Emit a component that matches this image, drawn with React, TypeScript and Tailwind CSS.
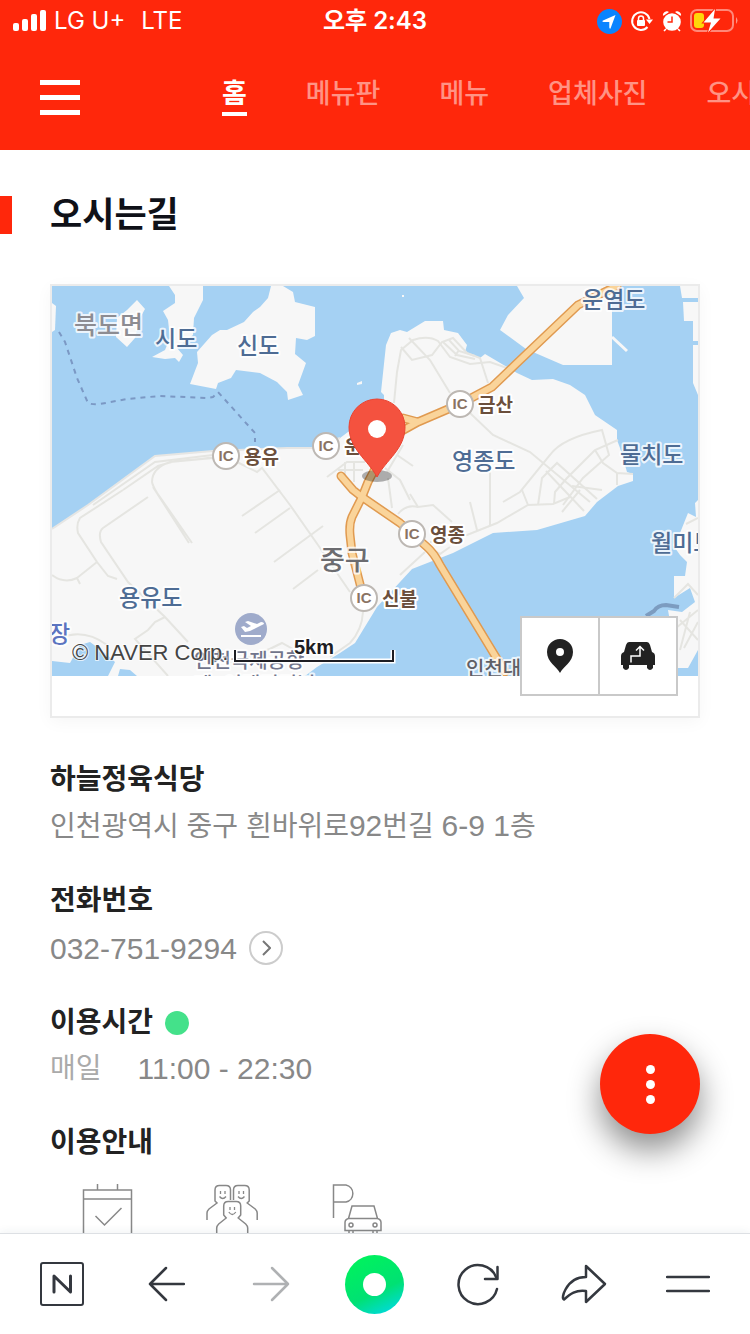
import React, { useState } from 'react';
import { clsx } from 'clsx';

const tabs = ['홈', '메뉴판', '메뉴', '업체사진', '오시는길'];

interface MapLabel {
    text: string;
    x: number;
    y: number;
    size: number;
    color: string;
}

const mapLabels: MapLabel[] = [
    { text: '북도면', x: 74, y: 334, size: 25, color: '#8c8c92' },
    { text: '시도', x: 155, y: 347, size: 23, color: '#4e6c94' },
    { text: '신도', x: 237, y: 354, size: 23, color: '#4e6c94' },
    { text: '운염도', x: 582, y: 308, size: 23, color: '#4e6c94' },
    { text: '영종도', x: 452, y: 469, size: 23, color: '#4e6c94' },
    { text: '물치도', x: 620, y: 463, size: 23, color: '#4e6c94' },
    { text: '용유도', x: 119, y: 606, size: 23, color: '#4e6c94' },
    { text: '월미도', x: 651, y: 551, size: 23, color: '#4e6c94' },
    { text: '장', x: 49, y: 642, size: 23, color: '#5b74c0' },
    { text: '중구', x: 320, y: 570, size: 27, color: '#6c6c70' },
    { text: '인천국제공항', x: 194, y: 668, size: 20, color: '#71758c' },
    { text: '제1여객터미널', x: 194, y: 692, size: 20, color: '#71758c' },
    { text: '인천대교', x: 466, y: 676, size: 20, color: '#5f5f66' },
];

const interchanges = [
    { name: '용유', x: 226, y: 456 },
    { name: '운서', x: 326, y: 446 },
    { name: '금산', x: 460, y: 404 },
    { name: '영종', x: 412, y: 534 },
    { name: '신불', x: 364, y: 598 },
];

// Land masses, drawn over the water
const land = [
    'M52 303l4 3-1 24-3 2z',
    'M117 318l10-8 10-10 8 9-5 9-5 20-8 9-11-10z',
    'M169 286l6 9v8l-12 8 5 9 2 18-5 12-13 7 13 2 10-1 4 4 4-7-6-7 16-13 1-17 9-18v-14z',
    'M271 286l-3 12-8 9-7 5-9 10-17 8h-7l-8 5-15 17 1 11-8 21 26 5 2-6 13-5 5-8 24 3 17 9 10 10 1 8 15-5-5-10 8-22-11-9 1-16 11 2 8-4v-29l-20-5-2-10-10-6z',
    'M357 383l5-2v3l-5 1z',
    'M402 295h2v2h-2z',
    'M52 529L88 505 155 456 213 451 287 448 312 448 340 438 348 432 384 412 384 395 381 392 386 345 391 333 400 330 407 332 425 321 443 321 444 330 458 333 467 345 465 352 480 358 485 354 517 373 532 380 553 379 570 385 585 395 595 415 617 430 617 440 620 448 627 472 633 474 633 481 618 486 597 502 585 516 537 530 493 533 453 553 412 569 377 607 355 643 340 653 317 667 305 676 137 676 130 670 120 669 118 676 108 676 115 662 105 653 90 642 80 645 70 663 52 661z',
    'M517 286l7 12-16 17-8 15 26 19 37 16h49v-79z',
    'M680 286l2 12h16v-12zM683 302l1 19h9v20h5v-39zM693 345v38l5 12v-50z',
    'M698 500l-3 3 1 14-8-4-8 20-7 12 7 10 7 7-2 14h-11v22l16-10 5 14-13 10-14-2 10 58h10l10-18z',
];

const roads = [
    'M93 505L155 462 213 455M123 490L80 518Q76 524 78 533L97 562 108 576 117 579',
    'M123 490L158 466 175 461 213 458M213 458L170 462Q152 468 152 482 153 488 165 505M155 490L192 543M153 487L189 543',
    'M148 497L103 528Q98 532 101 542L128 582 165 617 188 642',
    'M52 575Q64 584 77 578L97 562M77 578l3 6M165 617L155 622 148 630 135 639 168 676M60 638Q84 628 107 645',
    'M237 462L257 472 262 468 290 505 318 545 337 573 350 592',
    'M242 516L280 490M255 533L290 508M323 526L274 562M318 570L293 589',
    'M230 662Q260 655 282 643L300 653M363 612Q362 630 350 643L330 657',
    'M409 338L430 360 450 393M401 347L412 360 432 355 442 342 453 338 467 353 480 358 488 383',
    'M394 403L397 372 401 350 413 340Q428 335 438 341L450 357 470 364 490 362 507 368M443 342l14 13 18 4M449 340l10 11 16 5M455 356l4-6',
    'M470 413L493 435 530 452 590 502M503 502L520 492 550 455Q562 438 602 430L609 455 583 478 563 505',
    'M618 440L595 450 567 478 555 492 554 504M538 505L542 478 557 463 597 499M546 471L584 511M595 450L603 463 617 473 633 474M617 473v12',
    'M490 472v53M430 542L467 535 497 523 528 505 553 504 570 497 M522 490l6 15M470 502l7 28M410 494L418 507 433 505 452 522M398 514Q406 504 418 507M580 490l-18 22M572 486l30 4',
    'M387 472L403 445M385 468L400 480 410 500M397 455l16 11M388 478L392 508M327 477L347 462 365 462M345 462v18M354 462v20M338 470h25',
    'M427 547L440 554 450 547M400 575L425 552M698 518L686 524M674 598L688 584 698 595M680 620L698 640M690 612L680 650M698 610L676 628M698 622L684 648',
];

const highways = [
    'M617 286L578 305 517 363 492 387 460 404 418 422 400 432M403 418l15 4M377 465L368 482 362 497 352 517Q349 524 350 535L352 553 361 588',
    'M341 476L353 490 362 497 400 523 427 547Q434 553 440 565L505 672',
];

const MapView: React.FC = () => (
    <svg viewBox="52 286 646 390" preserveAspectRatio="xMidYMid slice" className="block h-[390px] w-full font-['Liberation_Sans','Noto_Sans_CJK_KR',sans-serif]">
        <rect x="52" y="286" width="646" height="390" fill="#a5d1f3" />
        {land.map(d => <path key={d} d={d} fill="#f7f7f7" />)}
        <path d="M612 337l15 14" stroke="#f7f7f7" strokeWidth="3" />
        <path d="M52 529L88 505 155 456 213 451 287 448 312 448 340 438" fill="none" stroke="#e6e6e4" strokeWidth="2" />
        {roads.map(d => <path key={d} d={d} fill="none" stroke="#e5e5e1" strokeWidth="2" />)}
        <path d="M59 332l6 10 12 36 11 25q5 2 12 1l27-5 33-3 47 2 6-1 5-5 37 41v9" fill="none" stroke="#7b98c4" strokeWidth="2" strokeDasharray="5 5" />
        <path d="M646 616l8-5q4-6 12-6l13 2" fill="none" stroke="#7c9cc0" strokeWidth="4" />
        {highways.map(d => <path key={d} d={d} fill="none" stroke="#e09a50" strokeWidth="9" strokeLinecap="round" strokeLinejoin="round" />)}
        {highways.map(d => <path key={d} d={d} fill="none" stroke="#fad49a" strokeWidth="6" strokeLinecap="round" strokeLinejoin="round" />)}

        {interchanges.map(ic => (
            <g key={ic.name}>
                <circle cx={ic.x} cy={ic.y} r="13" fill="#fff" stroke="#bdb8b3" strokeWidth="2" />
                <text x={ic.x} y={ic.y + 5} textAnchor="middle" fontSize="15" fontWeight="700" fill="#8a7364">IC</text>
                <text x={ic.x + 18} y={ic.y + 8} fontSize="19" fontWeight="700" fill="#6b4f3c" stroke="#fff" strokeWidth="4" strokeLinejoin="round" paintOrder="stroke">{ic.name}</text>
            </g>
        ))}

        <circle cx="251" cy="629" r="16" fill="#9fabcb" />
        <path d="M241 636h20" stroke="#fff" strokeWidth="2" />
        <path d="M241 627l3-1 3 2 4-2-6-4 3-1 9 3 4-2q3 0 3 2l-14 7-5 1z" fill="#fff" />

        {mapLabels.map(l => (
            <text key={l.text} x={l.x} y={l.y} fontSize={l.size} fontWeight="500" fill={l.color} stroke="#fff" strokeWidth="4" strokeOpacity="0.8" strokeLinejoin="round" paintOrder="stroke">{l.text}</text>
        ))}

        {/* Place marker */}
        <ellipse cx="377" cy="476" rx="15" ry="6" fill="#000" opacity="0.3" />
        <path d="M377 477C368 460 349 449 349 427a28 28 0 0 1 56 0c0 22-19 33-28 50z" fill="#f4523f" stroke="#ea4432" strokeWidth="1" />
        <circle cx="377" cy="429" r="9" fill="#fff" />

        {/* Copyright and scale bar */}
        <text x="72" y="660" fontSize="22" fill="#444" stroke="#fff" strokeWidth="2" strokeOpacity="0.7" paintOrder="stroke">© NAVER Corp.</text>
        <path d="M235 650v11h158v-11" fill="none" stroke="#fff" strokeWidth="5" />
        <path d="M235 650v11h158v-11" fill="none" stroke="#1e1e23" strokeWidth="2" />
        <text x="314" y="654" textAnchor="middle" fontSize="20" fontWeight="700" fill="#1e1e23" stroke="#fff" strokeWidth="3" paintOrder="stroke">5km</text>
    </svg>
);

const StatusBar: React.FC = () => (
    <div className="grid h-10 grid-cols-[1fr_auto_1fr] items-center px-3 pt-[2px] font-['Inter','Noto_Sans_CJK_KR',sans-serif] text-[24px] leading-[38px]">
        <div className="flex items-center gap-2">
            <svg width="34" height="22" viewBox="0 0 34 22" fill="currentColor">
                <rect x="1" y="13" width="6" height="8" rx="2" />
                <rect x="10" y="9" width="6" height="12" rx="2" />
                <rect x="19" y="4" width="6" height="17" rx="2" />
                <rect x="28" y="0" width="6" height="21" rx="2" />
            </svg>
            <span>LG U+</span>
            <span className="ml-2">LTE</span>
        </div>
        <div className="font-semibold">오후 2:43</div>
        <div className="flex items-center justify-end gap-2">
            <svg width="25" height="25" viewBox="0 0 25 25">
                <circle cx="12.500" cy="12.500" r="12.500" fill="#0a84ff" />
                <path d="M18.500 6L13.500 19.500Q12.500 20 12.300 18.500V13H6.500Q4.500 12.600 6 11.600z" fill="#fff" />
            </svg>
            <svg width="24" height="22" viewBox="0 0 24 22" fill="none" stroke="currentColor" strokeWidth="2">
                <path d="M19.500 9A8.800 8.800 0 1 0 17.500 17" />
                <path d="M16 9.500h7L19.500 14z" fill="currentColor" stroke="none" />
                <rect x="7" y="10" width="8" height="6" rx="1" fill="currentColor" stroke="none" />
                <path d="M8.500 11V8.500a2.500 2.500 0 0 1 5 0V11" strokeWidth="1.500" />
            </svg>
            <svg width="20" height="22" viewBox="0 0 20 22" fill="currentColor">
                <circle cx="10" cy="12" r="8.800" />
                <path d="M1.500 5A3.500 3.500 0 0 1 6 2zM18.500 5A3.500 3.500 0 0 0 14 2z" stroke="currentColor" strokeWidth="1.300" strokeLinejoin="round" />
                <path d="M4 19l-2 2M16 19l2 2" stroke="currentColor" strokeWidth="1.600" />
                <path d="M10 6.500V12H5.500" fill="none" stroke="#ff270b" strokeWidth="1.500" />
            </svg>
            <svg width="48" height="24" viewBox="0 0 48 24">
                <rect x="1" y="1" width="42" height="21" rx="6" fill="none" stroke="#fff" strokeOpacity="0.45" strokeWidth="2" />
                <path d="M46 8q3 3.500 0 7z" fill="#fff" opacity="0.5" />
                <rect x="4" y="4" width="10" height="15" rx="3" fill="#ffd60a" />
                <path d="M25 0L13.500 13.500H21L18 23.500 30.500 9.500H23.500z" fill="#fff" stroke="#ff270b" strokeWidth="2" paintOrder="stroke" />
            </svg>
        </div>
    </div>
);

const toolbarStroke = {
    fill: 'none',
    stroke: 'currentColor',
    strokeWidth: 2.5,
    strokeLinecap: 'round',
    strokeLinejoin: 'round',
} as const;

const BrowserToolbar: React.FC = () => (
    <nav className="fixed inset-x-0 bottom-0 z-20 grid h-[101px] grid-cols-7 items-center justify-items-center border-t border-[#dde0e4] bg-white px-[10px] text-[#34383f] shadow-[0_-2px_8px_rgba(40,60,90,0.06)]">
        <button aria-label="네이버 홈">
            <svg width="44" height="44" viewBox="0 0 44 44" {...toolbarStroke}>
                <rect x="1" y="1" width="42" height="42" rx="2" strokeWidth="2" />
                <path d="M14 30V14L30.500 30V14" strokeWidth="3" />
            </svg>
        </button>
        <button aria-label="뒤로">
            <svg width="38" height="38" viewBox="0 0 38 38" {...toolbarStroke}>
                <path d="M19 3L3 19l16 16M3 19h34" />
            </svg>
        </button>
        <button aria-label="앞으로" disabled className="text-[#afb1b3]">
            <svg width="38" height="38" viewBox="0 0 38 38" {...toolbarStroke}>
                <path d="M20 3l16 16-16 16M36 19H2" />
            </svg>
        </button>
        <button aria-label="그린닷" className="flex h-[59px] w-[59px] items-center justify-center rounded-full bg-[linear-gradient(155deg,#00f25d_10%,#00e173_60%,#00d9e8_95%)]">
            <span className="h-[23px] w-[23px] rounded-full bg-white" />
        </button>
        <button aria-label="새로고침">
            <svg width="44" height="44" viewBox="0 0 44 44" {...toolbarStroke}>
                <path d="M40 27A19.500 19.500 0 1 1 39 15" />
                <path d="M40.500 5v12H28" />
            </svg>
        </button>
        <button aria-label="공유">
            <svg width="46" height="40" viewBox="0 0 46 40" {...toolbarStroke}>
                <path d="M25 2l19 18-19 18V27C15 25.500 9 30 3 35.500 1 35 2 30 4.500 25.500 9 17 16 13 25 13z" />
            </svg>
        </button>
        <button aria-label="메뉴 더보기">
            <svg width="44" height="20" viewBox="0 0 44 20" {...toolbarStroke}>
                <path d="M1 3h42M1 17h42" />
            </svg>
        </button>
    </nav>
);

export default function App() {
    const [activeTab, setActiveTab] = useState('홈');

    return (
        <div className="bg-white font-['Liberation_Sans','Noto_Sans_CJK_KR',sans-serif] text-[#222]">
            <header className="bg-[#ff270b] text-white">
                <StatusBar />
                <div className="flex h-[110px] overflow-hidden pt-9 pl-10">
                    <button aria-label="전체 메뉴" className="mt-1 flex h-[35px] w-10 shrink-0 flex-col justify-between">
                        <span className="h-[5px] w-full bg-white" />
                        <span className="h-[5px] w-full bg-white" />
                        <span className="h-[5px] w-full bg-white" />
                    </button>
                    <nav className="ml-[142px] flex items-start gap-[59px] text-[27px] leading-9">
                        {tabs.map(tab => (
                            <button
                                key={tab}
                                onClick={() => setActiveTab(tab)}
                                className={clsx(
                                    'shrink-0 border-b-4 whitespace-nowrap',
                                    tab === activeTab ? 'border-white font-bold' : 'border-transparent font-medium text-white/50'
                                )}
                            >
                                {tab}
                            </button>
                        ))}
                    </nav>
                </div>
            </header>

            <main className="pt-[46px] pb-[80px]">
                <h2 className="border-l-[12px] border-[#ff270b] pl-[38px] text-[35px] leading-[38px] font-bold text-[#0f1118]">오시는길</h2>

                <div className="relative mx-[50px] mt-[50px] border-2 border-[#ebebeb] pb-10 shadow-[0_4px_16px_rgba(0,0,0,0.04)]">
                    <MapView />
                    <div className="absolute right-5 bottom-5 flex divide-x-2 divide-[#c9c9c9] border-2 border-[#c9c9c9] bg-white">
                        <button aria-label="위치 보기" className="flex h-[76px] w-[78px] items-center justify-center">
                            <svg width="26" height="34" viewBox="0 0 26 34">
                                <path fillRule="evenodd" d="M13 34C10 28 0 23 0 13a13 13 0 0 1 26 0c0 10-10 15-13 21zM13 9a4 4 0 1 0 0 8 4 4 0 0 0 0-8z" fill="#222" />
                            </svg>
                        </button>
                        <button aria-label="길찾기" className="flex h-[76px] w-[76px] items-center justify-center">
                            <svg width="34" height="28" viewBox="0 0 34 28">
                                <path d="M8 0h18q2 0 3 3l2 7q3 1 3 4v9h-2v3q-3 4-6 0v-3H8v3q-3 4-6 0v-3H0v-9q0-3 3-4l2-7q1-3 3-3z" fill="#222" />
                                <path d="M10 20.500V14h9V4.500M15 8.500l4-4 4 4" fill="none" stroke="#fff" strokeWidth="1.500" />
                            </svg>
                        </button>
                    </div>
                </div>

                <div className="mx-[50px] mt-[42px] flex flex-col gap-7 text-[28px]">
                    <section>
                        <h3 className="leading-10 font-bold">하늘정육식당</h3>
                        <p className="leading-[52px] text-[#888]">
                            인천광역시 중구 흰바위로<span className="text-[30px]">92</span>번길 <span className="text-[30px]">6-9 1</span>층
                        </p>
                    </section>
                    <section>
                        <h3 className="leading-10 font-bold">전화번호</h3>
                        <a href="tel:032-751-9294" className="flex h-[54px] items-center gap-3 text-[30px] text-[#888]">
                            032-751-9294
                            <span className="flex h-[34px] w-[34px] items-center justify-center rounded-full border-2 border-[#ccc]">
                                <svg width="10" height="16" viewBox="0 0 10 16" fill="none" stroke="#777" strokeWidth="2">
                                    <path d="M2 1l7 7-7 7" />
                                </svg>
                            </span>
                        </a>
                    </section>
                    <section>
                        <h3 className="flex items-center gap-3 leading-10 font-bold">
                            이용시간
                            <span className="h-6 w-6 rounded-full bg-[#44e18a]" />
                        </h3>
                        <dl className="flex gap-9 leading-[52px]">
                            <dt className="text-[#aaa]">매일</dt>
                            <dd className="text-[30px] text-[#888]">11:00 - 22:30</dd>
                        </dl>
                    </section>
                    <section>
                        <h3 className="leading-10 font-bold">이용안내</h3>
                        <ul className="mt-[21px] flex gap-[73px] pl-[31px]">
                            <li>
                                <svg width="52" height="60" viewBox="0 0 52 60" fill="none" stroke="#888" strokeWidth="1.500" role="img" aria-label="예약">
                                    <path d="M2.500 6h48v52h-48zM2.500 15h48M16.500 0v6M36.500 0v6M14.500 32l9 9 17-17" />
                                </svg>
                            </li>
                            <li>
                                <svg width="52" height="60" viewBox="0 0 52 60" fill="none" stroke="#888" strokeWidth="1.500" role="img" aria-label="단체석">
                                    <path d="M1 36v-7q0-2 2-4l8-6-2-2V6q0-4.500 4.500-4.500h6.500q4.500 0 4.500 4.500v10M51.200 36v-7q0-2-2-4l-8-6 2-2V6q0-4.500-4.500-4.500h-6.700q-4.500 0-4.500 4.500v10" />
                                    <path d="M10.700 60V44q0-2 2-4l7.500-6-2.500-3v-9q0-4.500 4.500-4.500h8q4.500 0 4.500 4.500v9l-2.500 3 7.500 6q2 2 2 4v16" />
                                    <path d="M14.500 7v3M19 7v3M33 7v3M37.500 7v3M24 23v3M28.500 23v3M13.500 12.500q3.200 4 6.500 0M32 12.500q3.200 4 6.500 0M22.800 28q3.500 5 7 0" strokeWidth="1.300" />
                                </svg>
                            </li>
                            <li>
                                <svg width="52" height="60" viewBox="0 0 52 60" fill="none" stroke="#888" strokeWidth="1.500" role="img" aria-label="주차">
                                    <path d="M2.500 34V1H15a8.700 8.700 0 0 1 0 17H2.500" />
                                    <path d="M17.500 34.500l3.500-12.500h22l3.500 12.500M17.500 34.500h29q3.500 1 3.500 4v8H14v-8q0-3 3.500-4zM18 46.500v6h4v-6M42 46.500v6h4v-6" />
                                    <circle cx="20" cy="41" r="2" />
                                    <circle cx="44" cy="41" r="2" />
                                </svg>
                            </li>
                        </ul>
                    </section>
                </div>
            </main>

            <button aria-label="더보기" className="fixed right-[50px] bottom-[200px] z-10 flex h-[100px] w-[100px] flex-col items-center justify-center gap-[6px] rounded-full bg-[#ff270b] shadow-[0_16px_32px_rgba(0,0,0,0.45)]">
                <span className="h-[9px] w-[9px] rounded-full bg-white" />
                <span className="h-[9px] w-[9px] rounded-full bg-white" />
                <span className="h-[9px] w-[9px] rounded-full bg-white" />
            </button>
            <BrowserToolbar />
        </div>
    );
}
